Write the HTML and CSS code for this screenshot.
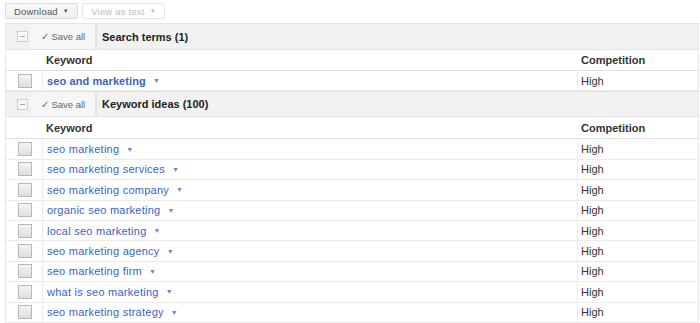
FILE: index.html
```html
<!DOCTYPE html>
<html>
<head>
<meta charset="utf-8">
<link rel="stylesheet" href="styles.css">
</head>
<body>
<div class="toolbar">
  <button class="btn">Download <span class="caret">▼</span></button>
  <button class="btn btn-disabled">View as text <span class="caret">▼</span></button>
</div>
<div class="table">
  <div class="section">
    <span class="collapse"><span class="minus"></span></span>
    <span class="save">✓ Save all</span>
    <span class="section-title">Search terms (1)</span>
  </div>
  <div class="row head">
    <div class="c1"></div>
    <div class="c2">Keyword</div>
    <div class="c3">Competition</div>
  </div>
  <div class="row">
    <div class="c1"><span class="cb"></span></div>
    <div class="c2"><a class="kw bold">seo and marketing</a><span class="arrow">▼</span></div>
    <div class="c3">High</div>
  </div>
  <div class="section s2">
    <span class="collapse"><span class="minus"></span></span>
    <span class="save">✓ Save all</span>
    <span class="section-title">Keyword ideas (100)</span>
  </div>
  <div class="row head h2">
    <div class="c1"></div>
    <div class="c2">Keyword</div>
    <div class="c3">Competition</div>
  </div>
  <div class="row r"><div class="c1"><span class="cb"></span></div><div class="c2"><a class="kw">seo marketing</a><span class="arrow">▼</span></div><div class="c3">High</div></div>
  <div class="row r"><div class="c1"><span class="cb"></span></div><div class="c2"><a class="kw">seo marketing services</a><span class="arrow">▼</span></div><div class="c3">High</div></div>
  <div class="row r"><div class="c1"><span class="cb"></span></div><div class="c2"><a class="kw">seo marketing company</a><span class="arrow">▼</span></div><div class="c3">High</div></div>
  <div class="row r"><div class="c1"><span class="cb"></span></div><div class="c2"><a class="kw">organic seo marketing</a><span class="arrow">▼</span></div><div class="c3">High</div></div>
  <div class="row r"><div class="c1"><span class="cb"></span></div><div class="c2"><a class="kw">local seo marketing</a><span class="arrow">▼</span></div><div class="c3">High</div></div>
  <div class="row r"><div class="c1"><span class="cb"></span></div><div class="c2"><a class="kw">seo marketing agency</a><span class="arrow">▼</span></div><div class="c3">High</div></div>
  <div class="row r"><div class="c1"><span class="cb"></span></div><div class="c2"><a class="kw">seo marketing firm</a><span class="arrow">▼</span></div><div class="c3">High</div></div>
  <div class="row r"><div class="c1"><span class="cb"></span></div><div class="c2"><a class="kw">what is seo marketing</a><span class="arrow">▼</span></div><div class="c3">High</div></div>
  <div class="row r"><div class="c1"><span class="cb"></span></div><div class="c2"><a class="kw">seo marketing strategy</a><span class="arrow">▼</span></div><div class="c3">High</div></div>
</div>
</body>
</html>
```
FILE: styles.css
```css
html, body {
  margin: 0;
  padding: 0;
  background: #fff;
  font-family: "Liberation Sans", Arial, sans-serif;
  font-size: 11px;
  color: #333;
  overflow: hidden;
}
.toolbar {
  display: flex;
  gap: 4px;
  padding: 3px 0 0 5px;
  height: 20px;
  box-sizing: border-box;
}
.btn {
  height: 16px;
  padding: 0 6px;
  border: 1px solid #dcdcdc;
  border-radius: 2px;
  background: linear-gradient(#f8f8f8, #f0f0f0);
  font-family: "Liberation Sans", Arial, sans-serif;
  font-size: 9.5px;
  letter-spacing: 0.2px;
  color: #555;
  display: flex;
  align-items: center;
  justify-content: center;
  gap: 5px;
}
.btn:first-child { width: 73px; }
.btn-disabled {
  width: 83px;
  background: #fff;
  color: #bcbcbc;
  border-color: #e6e6e6;
}
.caret { font-size: 6px; }
.table {
  margin: 3px 0 0 5px;
  width: 692px;
  border-left: 1px solid #e8e8e8;
  border-right: 1px solid #e8e8e8;
}
.section {
  height: 27px;
  box-sizing: border-box;
  background: #f2f2f2;
  border-top: 1px solid #e3e3e3;
  border-bottom: 1px solid #e3e3e3;
  display: flex;
  align-items: stretch;
}
.s2 { height: 26px; }
.collapse {
  width: 24px;
  display: flex;
  align-items: center;
  justify-content: center;
}
.minus {
  width: 9px;
  height: 9px;
  border: 1px solid #cfcfcf;
  background: #f7f7f7;
  position: relative;
  margin-left: 8px;
}
.minus::after {
  content: "";
  position: absolute;
  left: 2px;
  top: 4px;
  width: 5px;
  height: 1px;
  background: #aaa;
}
.save {
  margin-left: 1px;
  width: 64px;
  display: flex;
  align-items: center;
  justify-content: center;
  background: #f6f6f6;
  border-right: 2px solid #e2e2e2;
  font-size: 9.5px;
  color: #666;
}
.section-title {
  margin-left: 5px;
  display: flex;
  align-items: center;
  font-weight: bold;
  font-size: 11px;
  color: #222;
}
.row {
  display: grid;
  grid-template-columns: 36px 535px 121px;
  height: 20.4px;
  box-sizing: border-box;
  border-bottom: 1px solid #ebebeb;
}
.row.head {
  height: 21px;
  font-weight: bold;
  color: #333;
  border-bottom: 1px solid #e0e0e0;
}
.row.h2 { height: 22px; }
.row > div {
  display: flex;
  align-items: center;
}
.row:not(.head) .c2 { border-left: 1px solid #ececec; }
.row:not(.head) .c3 { border-left: 1px solid #ececec; }
.c2 { padding-left: 4px; }
.c3 { padding-left: 3px; }
.head .c2 { padding-left: 4px; }
.head .c3 { padding-left: 4px; }
.c1 { justify-content: center; padding-left: 2px; }
.cb {
  width: 12px;
  height: 12px;
  border: 1px solid #b8b8b8;
  background: linear-gradient(#f4f4f4, #dedede);
}
.kw {
  color: #3764c8;
  letter-spacing: 0.25px;
  cursor: pointer;
}
.kw.bold { font-weight: bold; color: #3a63c9; letter-spacing: 0.1px; }
.arrow {
  font-size: 7px;
  color: #6a86c8;
  margin-left: 7px;
}
```
